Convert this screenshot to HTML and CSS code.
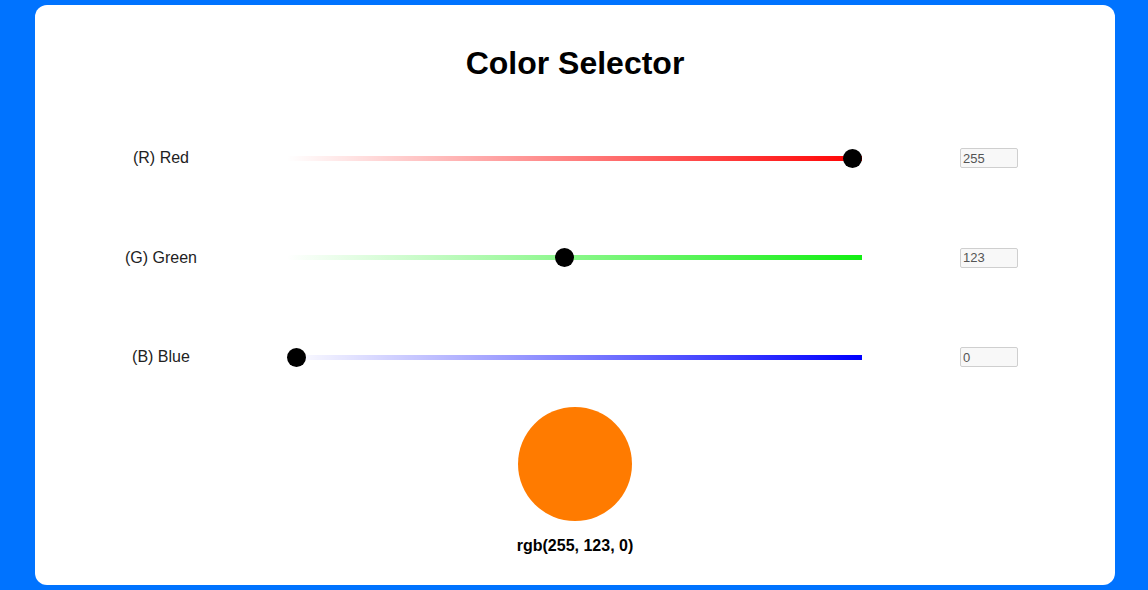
FILE: index.html
```html
<!DOCTYPE html>
<html lang="en">
<head>
<meta charset="utf-8">
<title>Color Selector</title>
<link rel="stylesheet" href="styles.css">
</head>
<body>
<main class="card">
  <h1 class="title">Color Selector</h1>
  <div class="rows">
    <div class="row">
      <label class="label" for="r">(R) Red</label>
      <input class="slider slider-red" id="r" type="range" min="0" max="255" value="255">
      <input class="num" type="text" value="255" readonly>
    </div>
    <div class="row">
      <label class="label" for="g">(G) Green</label>
      <input class="slider slider-green" id="g" type="range" min="0" max="255" value="123">
      <input class="num" type="text" value="123" readonly>
    </div>
    <div class="row">
      <label class="label" for="b">(B) Blue</label>
      <input class="slider slider-blue" id="b" type="range" min="0" max="255" value="0">
      <input class="num" type="text" value="0" readonly>
    </div>
  </div>
  <div class="swatch" style="background: rgb(255, 123, 0);"></div>
  <p class="value">rgb(255, 123, 0)</p>
</main>
</body>
</html>
```

FILE: styles.css
```css
html, body {
  margin: 0;
  height: 100%;
}
body {
  background: #0073ff;
  padding: 5px 33px 5px 35px;
  box-sizing: border-box;
  font-family: "Liberation Sans", Arial, sans-serif;
}
.card {
  background: #fff;
  border-radius: 12px;
  width: 1080px;
  height: 580px;
  box-sizing: border-box;
  padding-top: 40px;
}
.title {
  margin: 0;
  font-size: 32px;
  line-height: 37px;
  font-weight: bold;
  text-align: center;
  color: #000;
}
.rows {
  margin-top: 66px;
  display: flex;
  flex-direction: column;
  gap: 79.5px;
}
.row {
  display: grid;
  grid-template-columns: 252px 576px 252px;
  align-items: center;
  justify-items: center;
  height: 20px;
}
.label {
  font-size: 16px;
  color: #222;
}
.slider {
  -webkit-appearance: none;
  appearance: none;
  width: 575px;
  height: 5px;
  margin: 0;
  border-radius: 0;
  outline: none;
  justify-self: start;
}
.slider::-webkit-slider-thumb {
  -webkit-appearance: none;
  appearance: none;
  width: 19px;
  height: 19px;
  border-radius: 50%;
  background: #000;
  border: none;
  cursor: pointer;
}
.slider-red { background: linear-gradient(to right, rgba(255, 0, 0, 0), #ff0000); }
.slider-green { background: linear-gradient(to right, rgba(0, 255, 0, 0), #12ef12); }
.slider-blue { background: linear-gradient(to right, rgba(0, 0, 255, 0), #0000ff); }
.num {
  width: 58px;
  height: 20px;
  box-sizing: border-box;
  border: 1px solid #cfcfcf;
  border-radius: 2px;
  background: #f8f8f8;
  color: #545454;
  font-family: "Liberation Sans", Arial, sans-serif;
  font-size: 13px;
  padding: 0 2px;
  margin: 0;
  outline: none;
}
.swatch {
  width: 114px;
  height: 114px;
  border-radius: 50%;
  margin: 40px auto 0;
}
.value {
  margin: 16px 0 0;
  font-size: 16px;
  line-height: 18px;
  font-weight: bold;
  text-align: center;
  color: #000;
}
```
